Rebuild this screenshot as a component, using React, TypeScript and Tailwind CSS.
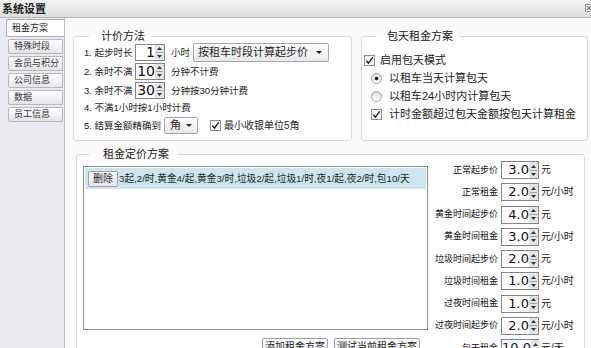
import React from "react";

type SpinProps = { value: string; w: string; size: string };

function SpinArrows() {
  return (
    <div className="flex w-[9px] shrink-0 flex-col items-center justify-center gap-[2px] self-stretch bg-[#e2e4e6]">
      <svg width="5" height="3" viewBox="0 0 5 3">
        <path d="M0 3 L2.5 0 L5 3 Z" fill="#333" />
      </svg>
      <div className="h-px w-[7px] bg-[#9da3a8]" />
      <svg width="5" height="3" viewBox="0 0 5 3">
        <path d="M0 0 L2.5 3 L5 0 Z" fill="#333" />
      </svg>
    </div>
  );
}

function Spin({ value, w, size }: SpinProps) {
  return (
    <div className={`flex h-full shrink-0 items-stretch border border-[#7f868c] bg-white ${w}`}>
      <span className={`flex-1 text-right font-['DejaVu_Sans',sans-serif] leading-[15px] text-[#111] ${size}`}>
        {value}
      </span>
      <SpinArrows />
    </div>
  );
}

function Check() {
  return (
    <svg width="11" height="11" viewBox="0 0 11 11" className="shrink-0">
      <rect x="0.5" y="0.5" width="10" height="10" fill="#fff" stroke="#8a8f94" />
      <path d="M2.3 5.6 L4.4 8.2 L8.7 2.4" fill="none" stroke="#1a1a1a" strokeWidth="1.4" />
    </svg>
  );
}

function Radio({ on }: { on?: boolean }) {
  return (
    <svg width="11" height="11" viewBox="0 0 11 11" className="shrink-0">
      <defs>
        <linearGradient id="rg" x1="0" y1="0" x2="0" y2="1">
          <stop offset="0" stopColor="#d9dde1" />
          <stop offset="1" stopColor="#ffffff" />
        </linearGradient>
      </defs>
      <circle cx="5.5" cy="5.5" r="5" fill="url(#rg)" stroke="#9aa0a6" />
      {on && <circle cx="5.5" cy="5.5" r="1.8" fill="#1a1a1a" />}
    </svg>
  );
}

function Caret() {
  return (
    <svg width="6" height="3" viewBox="0 0 6 3" className="shrink-0">
      <path d="M0 0 L3 3 L6 0 Z" fill="#222" />
    </svg>
  );
}

const rates = [
  { label: "正常起步价", value: "3.0", unit: "元" },
  { label: "正常租金", value: "2.0", unit: "元/小时" },
  { label: "黄金时间起步价", value: "4.0", unit: "元" },
  { label: "黄金时间租金", value: "3.0", unit: "元/小时" },
  { label: "垃圾时间起步价", value: "2.0", unit: "元" },
  { label: "垃圾时间租金", value: "1.0", unit: "元/小时" },
  { label: "过夜时间租金", value: "1.0", unit: "元" },
  { label: "过夜时间起步价", value: "2.0", unit: "元/小时" },
  { label: "包天租金", value: "10.0", unit: "元/天" }
];

const tabs = ["特殊时段", "会员与积分", "公司信息", "数据", "员工信息"];

export default function App() {
  return (
    <div className="flex h-[348px] w-[591px] flex-col overflow-hidden bg-[#f0f0f0] font-['Liberation_Sans','Noto_Sans_CJK_SC',sans-serif] text-[#1e1e1e]">
      {/* ── Title bar ── */}
      <div className="flex h-[18px] shrink-0 items-center justify-between border-b border-[#b4b9be] bg-linear-to-b from-[#f7f7f7] to-[#dcdcdc] pl-[2px]">
        <span className="text-[11px] font-bold leading-[12px] text-[#222]">系统设置</span>
        <svg width="8" height="8" viewBox="0 0 8 8" className="mr-[-2px] mb-[2px]">
          <rect x="0.5" y="0.5" width="7" height="7" fill="#eee" stroke="#9a9a9a" />
          <path d="M2 2 L6 6 M6 2 L2 6" stroke="#555" strokeWidth="1" />
        </svg>
      </div>

      <div className="flex min-h-0 flex-1">
        {/* ── Side tabs ── */}
        <div className="flex w-[64px] shrink-0 flex-col bg-[#e8ecf0] pt-px">
          <div className="ml-[6px] mr-[-1px] h-[18px] whitespace-nowrap rounded-l-[2px] border border-r-0 border-[#a9b0b6] bg-white pl-[5px] text-[9px] leading-[16px]">
            租金方案
          </div>
          {tabs.map((t) => (
            <div
              key={t}
              className="ml-[8px] mt-[2px] h-[15px] w-[55px] whitespace-nowrap rounded-l-[2px] border border-[#b3b9bf] bg-linear-to-b from-white to-[#e2e5e8] pl-[5px] text-[9px] leading-[13px] text-[#333]"
            >
              {t}
            </div>
          ))}
        </div>

        {/* ── Tab page ── */}
        <div className="flex-1 border-l border-[#b7bec4] bg-[#fbfbfb] pl-[8px] pt-[12px]">
          <div className="flex items-start gap-[9px]">
            {/* 计价方法 */}
            <fieldset className="h-[111px] w-[279px] shrink-0 rounded-[3px] border border-[#d3dbe1] bg-white">
              <legend className="ml-[15px] pl-[12px] pr-[6px] text-[11px] leading-[12px] text-[#222]">计价方法</legend>
              <div className="flex flex-col gap-[2px] whitespace-nowrap pl-[10px] pt-[2px] text-[9.5px] leading-[12px]">
                <div className="flex h-[17px] items-center">
                  <span className="w-[51px] shrink-0">1. 起步时长</span>
                  <Spin value="1" w="w-[30px]" size="text-[14px]" />
                  <span className="ml-[6px] shrink-0">小时</span>
                  <div className="ml-[3px] flex h-[19px] w-[136px] shrink-0 items-center justify-between rounded-[2px] border border-[#a2a8ad] bg-linear-to-b from-white to-[#e6e8ea] pl-[4px] pr-[6px]">
                    <span className="text-[11px] leading-[13px]">按租车时段计算起步价</span>
                    <Caret />
                  </div>
                </div>
                <div className="flex h-[17px] items-center">
                  <span className="w-[51px] shrink-0">2. 余时不满</span>
                  <Spin value="10" w="w-[30px]" size="text-[14px]" />
                  <span className="ml-[6px]">分钟不计费</span>
                </div>
                <div className="flex h-[17px] items-center">
                  <span className="w-[51px] shrink-0">3. 余时不满</span>
                  <Spin value="30" w="w-[30px]" size="text-[14px]" />
                  <span className="ml-[6px]">分钟按30分钟计费</span>
                </div>
                <div className="flex h-[14px] items-center">
                  <span>4. 不满1小时按1小时计费</span>
                </div>
                <div className="flex h-[17px] items-center">
                  <span className="w-[80px] shrink-0">5. 结算金额精确到</span>
                  <div className="flex h-[17px] w-[34px] shrink-0 items-center justify-between rounded-[2px] border border-[#a2a8ad] bg-linear-to-b from-white to-[#e6e8ea] pl-[5px] pr-[5px]">
                    <span className="text-[11px] leading-[13px]">角</span>
                    <Caret />
                  </div>
                  <div className="ml-[12px] flex items-center gap-[3px]">
                    <Check />
                    <span className="text-[10px]">最小收银单位5角</span>
                  </div>
                </div>
              </div>
            </fieldset>

            {/* 包天租金方案 */}
            <fieldset className="h-[111px] w-[227px] shrink-0 rounded-[3px] border border-[#d3dbe1] bg-white">
              <legend className="ml-[14px] pl-[11px] pr-[6px] text-[11px] leading-[12px] text-[#222]">包天租金方案</legend>
              <div className="flex flex-col whitespace-nowrap pt-[9px] text-[11px] leading-[13px]">
                <div className="flex h-[18px] items-center gap-[5px] pl-[2px]">
                  <Check />
                  <span>启用包天模式</span>
                </div>
                <div className="flex h-[18px] items-center gap-[7px] pl-[9px]">
                  <Radio on />
                  <span>以租车当天计算包天</span>
                </div>
                <div className="flex h-[18px] items-center gap-[7px] pl-[9px]">
                  <Radio />
                  <span>以租车24小时内计算包天</span>
                </div>
                <div className="flex h-[18px] items-center gap-[7px] pl-[9px]">
                  <Check />
                  <span>计时金额超过包天金额按包天计算租金</span>
                </div>
              </div>
            </fieldset>
          </div>

          {/* 租金定价方案 */}
          <fieldset className="ml-[3px] mt-[7px] h-[230px] w-[509px] rounded-[3px] border border-[#d3dbe1] bg-white">
            <legend className="ml-[12px] pl-[14px] pr-[8px] text-[11px] leading-[12px] text-[#222]">租金定价方案</legend>
            <div className="flex items-start pl-[6px] pt-px">
              <div className="flex shrink-0 flex-col">
                <div className="mt-[5px] h-[164px] w-[345px] overflow-hidden border border-[#8a9096] bg-white p-px">
                  <div className="flex h-[21px] items-center bg-[#cde5ef]">
                    <div className="ml-[3px] flex h-[16px] w-[30px] shrink-0 items-center justify-center whitespace-nowrap rounded-[2px] border border-[#9aa1a7] bg-linear-to-b from-white to-[#e3e6e9] text-[10px] leading-[12px]">
                      删除
                    </div>
                    <span className="ml-px whitespace-nowrap text-[9.7px] leading-[12px]">
                      3起,2/时,黄金4/起,黄金3/时,垃圾2/起,垃圾1/时,夜1/起,夜2/时,包10/天
                    </span>
                  </div>
                </div>
                <div className="mt-[8px] flex justify-end gap-[6px] whitespace-nowrap pr-[8px] text-[10px] leading-[12px]">
                  <div className="flex h-[18px] items-center rounded-[2px] border border-[#9aa1a7] bg-linear-to-b from-white to-[#e3e6e9] px-[2px]">
                    添加租金方案
                  </div>
                  <div className="flex h-[18px] items-center rounded-[2px] border border-[#9aa1a7] bg-linear-to-b from-white to-[#e3e6e9] px-[2px]">
                    测试当前租金方案
                  </div>
                </div>
              </div>

              <div className="ml-[4px] flex flex-col gap-[4.25px] whitespace-nowrap">
                {rates.map((r) => (
                  <div key={r.label} className="flex h-[18px] items-center">
                    <span className="w-[66px] shrink-0 text-right text-[9px] leading-[11px] text-[#111]">{r.label}</span>
                    <div className="ml-[3px] h-[18px]">
                      <Spin value={r.value} w="w-[38px]" size="text-[13px]" />
                    </div>
                    <span className="ml-[2px] text-[10px] leading-[12px]">{r.unit}</span>
                  </div>
                ))}
              </div>
            </div>
          </fieldset>
        </div>
      </div>
    </div>
  );
}
